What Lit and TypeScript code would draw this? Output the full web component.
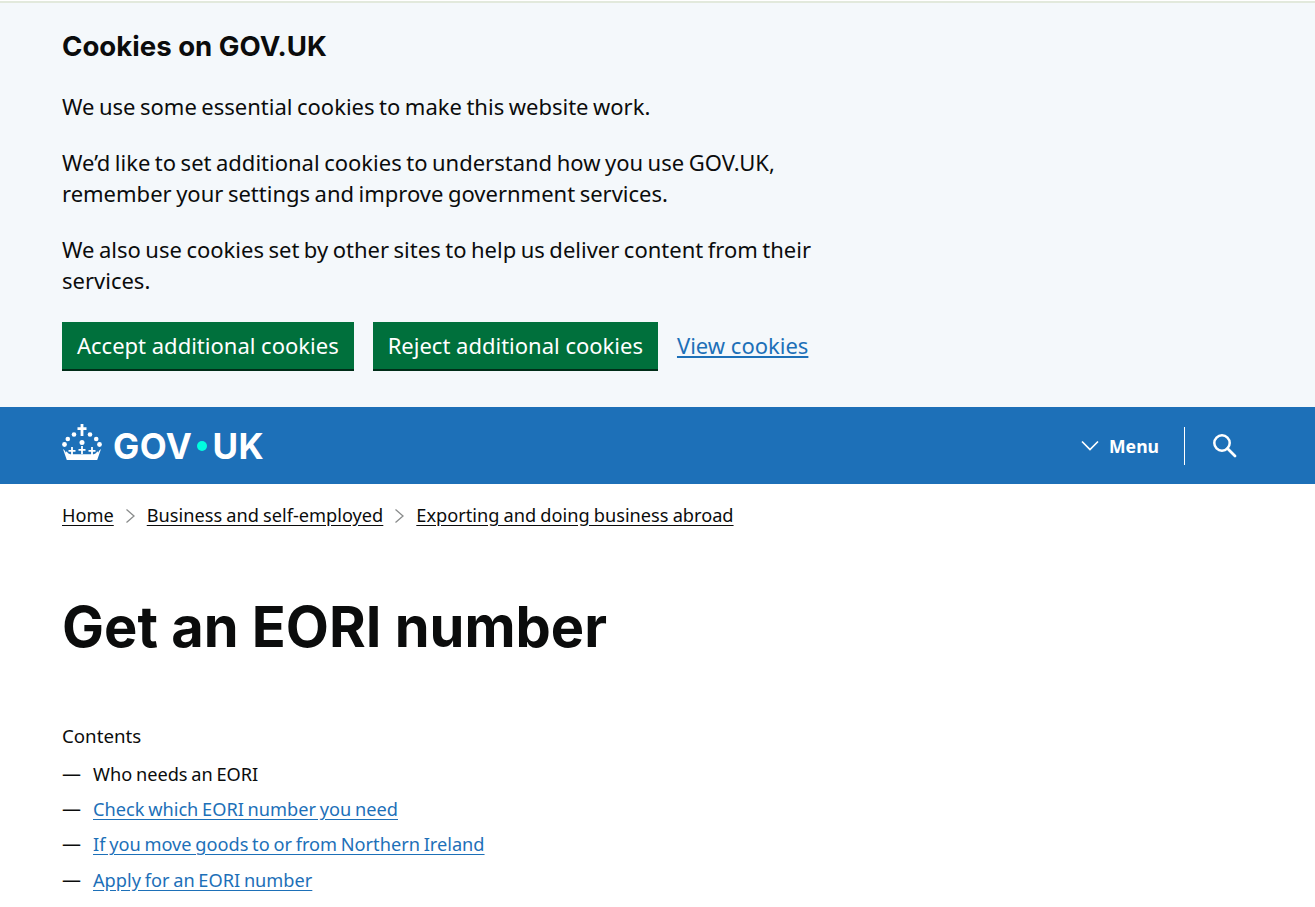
import { LitElement, html, css } from 'lit'
import { customElement } from 'lit/decorators.js'

/**
 * GOV.UK guide page: cookie banner, masthead, breadcrumbs and contents list
 */
@customElement('app-root')
export class AppRoot extends LitElement {
  static styles = css`
    :host {
      display: block;
      font-family: 'Noto Sans', sans-serif;
      color: #0b0c0c;
      background: #fff;
      height: 907px;
      overflow: hidden;
    }

    a {
      color: inherit;
    }

    .cookie-banner {
      background: #f4f8fb;
      height: 407px;
      box-sizing: border-box;
      padding: 0 62px;
    }

    .cookie-topline {
      height: 2px;
      margin: 0 -62px;
      padding-top: 1px;
      background: #fff;
    }

    .cookie-topline div {
      height: 2px;
      background: #e2e9dc;
    }

    .cookie-banner h2 {
      margin: 0;
      padding-top: 26px;
      font-family: 'Inter', 'Noto Sans', sans-serif;
      font-size: 27.6px;
      line-height: 35px;
      font-weight: 700;
    }

    .cookie-banner p {
      margin: 0;
      width: 780px;
      font-size: 22px;
      line-height: 31.4px;
      word-spacing: -1.2px;
    }

    .cookie-first {
      padding-top: 27px;
    }

    .cookie-next {
      padding-top: 24.3px;
    }

    .cookie-actions {
      display: flex;
      align-items: center;
      gap: 19px;
      margin-top: 25.7px;
    }

    .button {
      box-sizing: border-box;
      height: 49px;
      padding: 0 15px 1px;
      display: flex;
      align-items: center;
      background: #00703c;
      border-bottom: 2px solid #002d18;
      color: #fff;
      font-size: 22px;
      white-space: nowrap;
    }

    .view-link {
      color: #1d70b8;
      font-size: 22px;
      margin-bottom: 4px;
    }

    .masthead {
      height: 77px;
      background: #1d70b8;
      color: #fff;
      display: flex;
      align-items: center;
      padding: 0 78px 0 62px;
    }

    .logo {
      display: flex;
      align-items: center;
      gap: 10px;
    }

    .crown {
      display: block;
      margin-bottom: 5px;
    }

    .wordmark {
      font-family: 'Inter', 'Noto Sans', sans-serif;
      font-size: 35px;
      line-height: 40px;
      font-weight: 700;
      display: flex;
      align-items: center;
    }

    .wordmark i {
      width: 10px;
      height: 10px;
      margin: 0 5px;
      border-radius: 50%;
      background: #00ffe0;
    }

    .wordmark span {
      letter-spacing: 0.5px;
    }

    .nav {
      margin-left: auto;
      display: flex;
      align-items: center;
    }

    .menu {
      display: flex;
      align-items: center;
      gap: 10px;
      padding-right: 25px;
      border-right: 1px solid #fff;
      height: 38px;
      font-size: 17.6px;
      font-weight: 700;
    }

    .search {
      display: block;
      margin-left: 27px;
    }

    .breadcrumbs {
      display: flex;
      align-items: center;
      padding: 20px 62px 0;
      font-size: 18.2px;
      line-height: 23px;
      word-spacing: -0.6px;
    }

    .breadcrumbs a {
      text-underline-offset: 3px;
    }

    .breadcrumbs svg {
      display: block;
      margin: 0 11px;
    }

    h1 {
      margin: 0;
      padding: 68px 62px 0;
      font-family: 'Inter', 'Noto Sans', sans-serif;
      font-size: 56px;
      line-height: 65px;
      font-weight: 700;
    }

    .contents {
      padding: 63px 62px 0;
      font-size: 18.2px;
      word-spacing: -1px;
    }

    .contents-title {
      font-size: 18.7px;
      line-height: 26px;
      margin-bottom: 8px;
    }

    .contents ol {
      list-style: none;
      margin: 0;
      padding: 0;
    }

    .contents li {
      display: flex;
      height: 35.2px;
      line-height: 35.2px;
    }

    .dash {
      width: 31px;
      flex: none;
      font-size: 19px;
    }

    .contents a {
      color: #1d70b8;
      text-underline-offset: 3px;
    }
  `

  private chevron() {
    return html`<svg width="11" height="16" viewBox="0 0 11 16" fill="none">
      <path d="M1.5 1.5 9 8 1.5 14.5" stroke="#8a8c8c" stroke-width="1.3" />
    </svg>`
  }

  private smallCross(x: number, y: number) {
    return `M${x - 0.9} ${y - 4}h1.8v3h2.6v1.800h-2.600v3.200h-1.800v-3.200h-2.600v-1.800h2.600z`
  }

  private crown() {
    return html`<svg class="crown" width="41" height="38" viewBox="0 0 41 38" fill="#fff">
      <path d="M18.600 0h2.800v3.300h3.100v2.800h-3.100v6h-2.800v-6h-3.100v-2.800h3.100z" />
      <circle cx="12" cy="10.500" r="2.300" />
      <circle cx="28" cy="10.500" r="2.300" />
      <circle cx="5.800" cy="15" r="2.300" />
      <circle cx="34.200" cy="15" r="2.300" />
      <circle cx="2.500" cy="20.500" r="2.400" />
      <circle cx="37.500" cy="20.500" r="2.400" />
      <circle cx="20" cy="18.500" r="2.500" />
      <path d="${this.smallCross(10, 27)}" />
      <path d="${this.smallCross(20, 26)}" />
      <path d="${this.smallCross(30, 27)}" />
      <path
        d="M1 25c1.300.8 2.300 2 2.700 3.400l1.100-1.100c.6 1.500 1.800 2.500 3.400 3h23.600c1.600-.5 2.800-1.500 3.400-3l1.100 1.100c.4-1.400 1.400-2.600 2.700-3.400l-3.800 11H4.800z"
      />
    </svg>`
  }

  render() {
    return html`
      <section class="cookie-banner">
        <div class="cookie-topline"><div></div></div>
        <h2>Cookies on GOV.UK</h2>
        <p class="cookie-first">We use some essential cookies to make this website work.</p>
        <p class="cookie-next">
          We’d like to set additional cookies to understand how you use GOV.UK,<br />
          remember your settings and improve government services.
        </p>
        <p class="cookie-next">
          We also use cookies set by other sites to help us deliver content from their services.
        </p>
        <div class="cookie-actions">
          <div class="button">Accept additional cookies</div>
          <div class="button">Reject additional cookies</div>
          <a class="view-link" href="#">View cookies</a>
        </div>
      </section>

      <header class="masthead">
        <div class="logo">
          ${this.crown()}
          <div class="wordmark"><span>GOV</span><i></i><span>UK</span></div>
        </div>
        <div class="nav">
          <div class="menu">
            <svg width="18" height="11" viewBox="0 0 18 11" fill="none">
              <path d="M1 1.500 9 9.500l8-8" stroke="#fff" stroke-width="1.700" />
            </svg>
            Menu
          </div>
          <svg class="search" width="25" height="25" viewBox="0 0 25 25" fill="none">
            <circle cx="10" cy="10" r="7.700" stroke="#fff" stroke-width="2.500" />
            <path d="m15.500 15.500 7.500 7.500" stroke="#fff" stroke-width="2.800" stroke-linecap="round" />
          </svg>
        </div>
      </header>

      <nav class="breadcrumbs">
        <a href="#">Home</a>
        ${this.chevron()}
        <a href="#">Business and self-employed</a>
        ${this.chevron()}
        <a href="#">Exporting and doing business abroad</a>
      </nav>

      <h1>Get an EORI number</h1>

      <section class="contents">
        <div class="contents-title">Contents</div>
        <ol>
          <li><span class="dash">—</span>Who needs an EORI</li>
          <li><span class="dash">—</span><a href="#">Check which EORI number you need</a></li>
          <li><span class="dash">—</span><a href="#">If you move goods to or from Northern Ireland</a></li>
          <li><span class="dash">—</span><a href="#">Apply for an EORI number</a></li>
        </ol>
      </section>
    `
  }
}
